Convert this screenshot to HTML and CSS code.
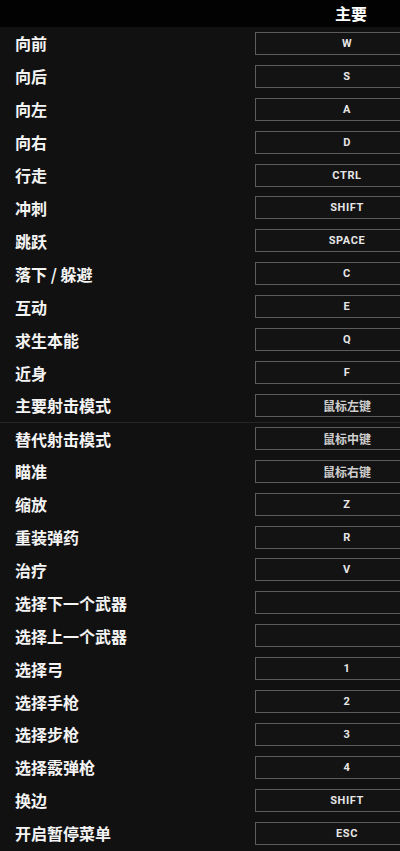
FILE: index.html
```html
<!DOCTYPE html>
<html lang="zh-CN">
<head>
    <meta charset="UTF-8">
    <meta name="viewport" content="width=device-width, initial-scale=1.0">
    <title>按键设置</title>
    <link rel="stylesheet" href="styles.css">
</head>
<body>
    <div class="keys">
        <div class="keys-head">
            <span class="head-col">主要</span>
        </div>
        <div class="row"><span class="name">向前</span><span class="bind">W</span></div>
        <div class="row"><span class="name">向后</span><span class="bind">S</span></div>
        <div class="row"><span class="name">向左</span><span class="bind">A</span></div>
        <div class="row"><span class="name">向右</span><span class="bind">D</span></div>
        <div class="row"><span class="name">行走</span><span class="bind">CTRL</span></div>
        <div class="row"><span class="name">冲刺</span><span class="bind">SHIFT</span></div>
        <div class="row"><span class="name">跳跃</span><span class="bind">SPACE</span></div>
        <div class="row"><span class="name">落下 / 躲避</span><span class="bind">C</span></div>
        <div class="row"><span class="name">互动</span><span class="bind">E</span></div>
        <div class="row"><span class="name">求生本能</span><span class="bind">Q</span></div>
        <div class="row"><span class="name">近身</span><span class="bind">F</span></div>
        <div class="row"><span class="name">主要射击模式</span><span class="bind cn">鼠标左键</span></div>
        <div class="row sep"><span class="name">替代射击模式</span><span class="bind cn">鼠标中键</span></div>
        <div class="row"><span class="name">瞄准</span><span class="bind cn">鼠标右键</span></div>
        <div class="row"><span class="name">缩放</span><span class="bind">Z</span></div>
        <div class="row"><span class="name">重装弹药</span><span class="bind">R</span></div>
        <div class="row"><span class="name">治疗</span><span class="bind">V</span></div>
        <div class="row"><span class="name">选择下一个武器</span><span class="bind"></span></div>
        <div class="row"><span class="name">选择上一个武器</span><span class="bind"></span></div>
        <div class="row"><span class="name">选择弓</span><span class="bind">1</span></div>
        <div class="row"><span class="name">选择手枪</span><span class="bind">2</span></div>
        <div class="row"><span class="name">选择步枪</span><span class="bind">3</span></div>
        <div class="row"><span class="name">选择霰弹枪</span><span class="bind">4</span></div>
        <div class="row"><span class="name">换边</span><span class="bind">SHIFT</span></div>
        <div class="row"><span class="name">开启暂停菜单</span><span class="bind">ESC</span></div>
    </div>
</body>
</html>
```

FILE: styles.css
```css
html, body {
    margin: 0;
    height: 100%;
    overflow: hidden;
}
body {
    background: #111111;
    color: #f2f2f2;
    font-family: "Noto Sans CJK SC", "Noto Sans", sans-serif;
}
.keys {
    width: 400px;
}
.keys-head {
    height: 27px;
    background: #020202;
    display: flex;
    justify-content: flex-end;
    align-items: center;
    padding-right: 33px;
}
.head-col {
    font-size: 16px;
    font-weight: bold;
    color: #fff;
    line-height: 1;
    padding-bottom: 1px;
}
.row {
    height: 32.92px;
    box-sizing: border-box;
    display: flex;
    align-items: center;
    justify-content: space-between;
    padding-left: 15px;
}
.row.sep {
    border-top: 1px solid #262626;
}
.name {
    font-size: 16px;
    font-weight: bold;
    line-height: 1;
    color: #f4f4f4;
}
.bind {
    width: 145px;
    height: 23px;
    box-sizing: border-box;
    border: 1px solid #5c5c5c;
    border-right: none;
    background: #131313;
    display: flex;
    align-items: center;
    justify-content: center;
    padding-left: 38px;
    font-family: Roboto, "Noto Sans", sans-serif;
    font-size: 11px;
    font-weight: bold;
    letter-spacing: 0.6px;
    color: #e6e6e6;
}
.bind.cn {
    font-family: "Noto Sans CJK SC", sans-serif;
    font-size: 12px;
    letter-spacing: 0;
    color: #cfcfcf;
}
```
